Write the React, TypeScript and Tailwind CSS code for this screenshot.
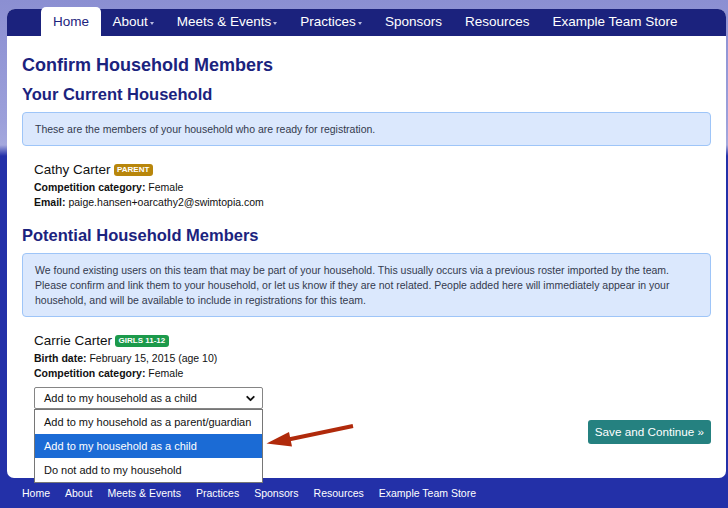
import { ChevronDown } from 'lucide-react'

const NAV = [
  { label: 'Home', caret: false, active: true },
  { label: 'About', caret: true },
  { label: 'Meets & Events', caret: true },
  { label: 'Practices', caret: true },
  { label: 'Sponsors', caret: false },
  { label: 'Resources', caret: false },
  { label: 'Example Team Store', caret: false },
]

const FOOTER = ['Home', 'About', 'Meets & Events', 'Practices', 'Sponsors', 'Resources', 'Example Team Store']

const OPTIONS = [
  'Add to my household as a parent/guardian',
  'Add to my household as a child',
  'Do not add to my household',
]

function Badge({ children, color }: { children: string; color: string }) {
  return (
    <span className={`${color} rounded-[3px] px-[3.5px] py-[2px] text-[8px] font-bold leading-[8.5px] text-white`}>
      {children}
    </span>
  )
}

export default function App() {
  return (
    <div
      className="relative min-h-[508px] w-[728px] overflow-hidden bg-[linear-gradient(180deg,#8b8fd2_0px,#9ca0da_120px,#a4a8dd_145px,#2330a8_156px,#2330a8_100%)] pt-[9px] text-[#222] [font-family:'Liberation_Sans',Arial,sans-serif]"
    >
      <div className="ml-[7px] mr-[2px] overflow-visible rounded-b-[7px] rounded-t-[8px] bg-white">
        {/* Top nav */}
        <nav className="flex h-[27px] items-stretch rounded-t-[8px] bg-[#1b227d] pl-[34px] text-[13.5px]">
          {NAV.map((item) => (
            <a
              key={item.label}
              className={
                item.active
                  ? '-mt-[2px] flex items-center rounded-t-[5px] bg-white px-[12px] pt-[2px] text-[#1b227d]'
                  : 'flex items-center px-[11.5px] text-white'
              }
            >
              {item.label}
              {item.caret && (
                <span className="ml-[2px] mt-[2px] inline-block h-0 w-0 border-x-[2.5px] border-t-[3px] border-x-transparent border-t-[#b8bbe0]" />
              )}
            </a>
          ))}
        </nav>

        <div className="px-[15px] pb-[34px]">
          <h1 className="mt-[18px] text-[18px] font-bold leading-[22px] text-[#1b237e]">Confirm Household Members</h1>
          <h2 className="mt-[7px] text-[16.5px] font-bold leading-[22px] text-[#1b237e]">Your Current Household</h2>

          <div className="mt-[7px] rounded-[4px] border border-[#9ec5f8] bg-[#dbe8fd] px-[12px] py-[8px] text-[10.5px] leading-[16px] text-[#333a4d]">
            These are the members of your household who are ready for registration.
          </div>

          <div className="mt-[14px] pl-[12px]">
            <div className="flex items-center gap-[3px] text-[13.5px] leading-[20px] text-[#111]">
              Cathy Carter <Badge color="bg-[#b8860b]">PARENT</Badge>
            </div>
            <div className="text-[10.5px] leading-[15px] text-[#111]">
              <div>
                <b>Competition category:</b> Female
              </div>
              <div>
                <b>Email:</b> paige.hansen+oarcathy2@swimtopia.com
              </div>
            </div>
          </div>

          <h2 className="mt-[14px] text-[16.5px] font-bold leading-[22px] text-[#1b237e]">Potential Household Members</h2>

          <div className="mt-[7px] rounded-[4px] border border-[#9ec5f8] bg-[#dbe8fd] px-[12px] pb-[8px] pt-[9px] text-[10.5px] leading-[15px] text-[#333a4d]">
            We found existing users on this team that may be part of your household. This usually occurs via a previous roster imported by the team.
            Please confirm and link them to your household, or let us know if they are not related. People added here will immediately appear in your
            household, and will be available to include in registrations for this team.
          </div>

          <div className="mt-[14px] pl-[12px]">
            <div className="flex items-center gap-[3px] text-[13.5px] leading-[20px] text-[#111]">
              Carrie Carter <Badge color="bg-[#1c9a4b]">GIRLS 11-12</Badge>
            </div>
            <div className="text-[10.5px] leading-[15px] text-[#111]">
              <div>
                <b>Birth date:</b> February 15, 2015 (age 10)
              </div>
              <div>
                <b>Competition category:</b> Female
              </div>
            </div>

            <div className="relative mt-[6px] w-[229px]">
              <div className="flex h-[22px] items-center justify-between rounded-[2px] border border-[#858585] bg-white pl-[9px] pr-[5px] text-[11px] text-[#111]">
                Add to my household as a child
                <ChevronDown className="h-[13px] w-[13px]" strokeWidth={3.5} />
              </div>
              {/* open native list */}
              <div className="absolute left-0 top-full z-10 w-[229px] border border-[#767676] bg-white text-[11px] text-[#111]">
                {OPTIONS.map((opt, i) => (
                  <div
                    key={opt}
                    className={`flex h-[24px] items-center pl-[9px] ${i === 1 ? 'bg-[#1b6bd5] text-white' : ''}`}
                  >
                    {opt}
                  </div>
                ))}
              </div>
            </div>
          </div>

          <div className="mt-[11px] flex justify-end">
            <button className="h-[24px] rounded-[3px] bg-[#258180] px-[7px] text-[11.7px] text-white">
              Save and Continue »
            </button>
          </div>
        </div>
      </div>

      {/* Footer nav */}
      <footer className="flex gap-[15px] px-[22px] pb-[8px] pt-[8px] text-[10.5px] leading-[15px] text-white">
        {FOOTER.map((f) => (
          <a key={f}>{f}</a>
        ))}
      </footer>

      {/* annotation arrow */}
      <svg className="absolute left-[260px] top-[410px]" width="100" height="45" viewBox="0 0 100 45">
        <line x1="93" y1="16" x2="26" y2="30" stroke="#b02a0b" strokeWidth="4" />
        <polygon points="6.5,33.5 29,22 32,36.5" fill="#b02a0b" />
      </svg>
    </div>
  )
}
